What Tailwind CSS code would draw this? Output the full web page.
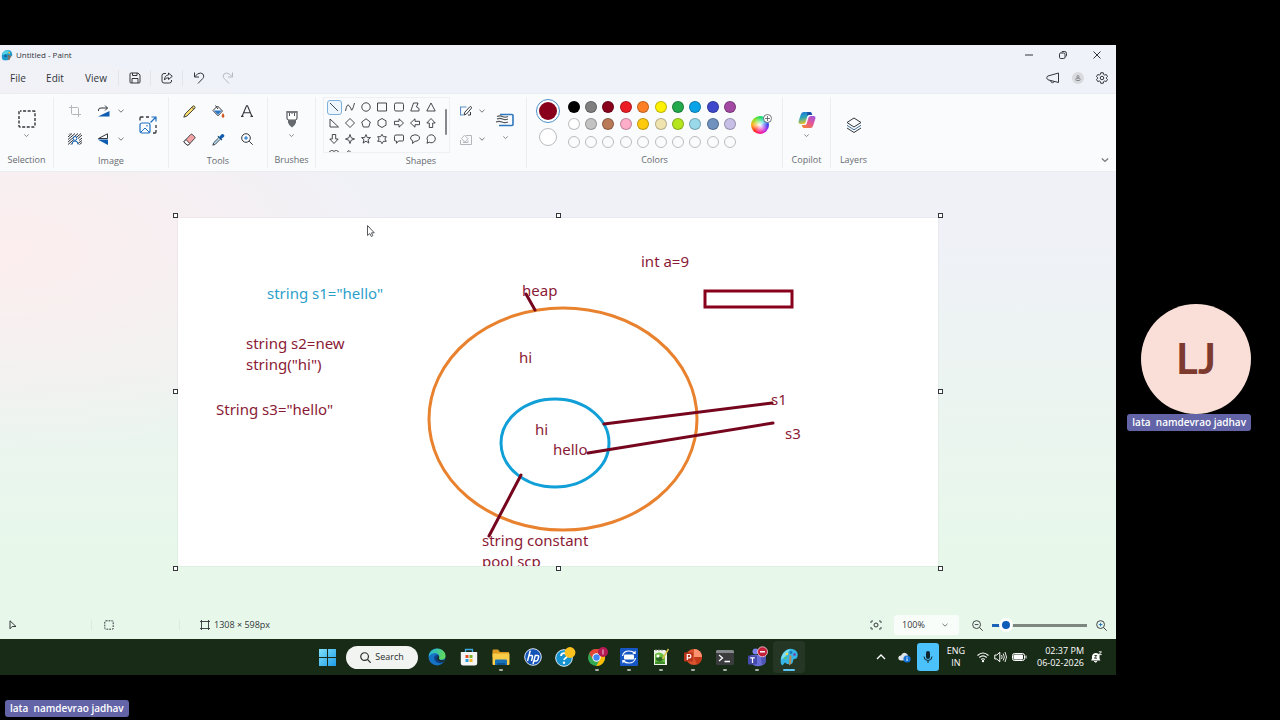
<!DOCTYPE html>
<html lang="en">

<head>
  <meta charset="UTF-8" />
  <title>Untitled - Paint</title>
  <meta name="viewport" content="width=device-width, initial-scale=1.0" />
  <script src="https://cdn.jsdelivr.net/npm/@tailwindcss/browser@4"></script>
</head>

<body class="flex flex-col min-h-screen bg-black pt-[45px] font-['Open_Sans','Noto_Sans',sans-serif] text-[#33363b]">

  <svg class="hidden">
    <symbol id="chev" viewBox="0 0 8 8"><path d="M1.5 2.8 4 5.2l2.5-2.4" fill="none" stroke="#77797d" stroke-width="1" /></symbol>
  </svg>

  <div class="flex flex-1">
    <!-- Paint window -->
    <div class="flex flex-1 flex-col bg-[radial-gradient(ellipse_420px_200px_at_0%_33%,#fdeeee,transparent),linear-gradient(to_bottom,#eff2f8_0%,#eff1f7_30%,#ebf5ef_62%,#e7f8ea_82%)]">

      <header class="flex h-5 items-center justify-between pl-px">
        <div class="flex items-center gap-[3px]">
          <svg class="size-3" viewBox="0 0 16 16">
            <path d="M2 14C0 9 1 3 7 1.500c5-1 8 2 8 6 0 3-3 2.500-4 3-1.500 1 0 4-3 4.500C5 15.500 3 15 2 14Z" fill="#1d9bd1" />
            <path d="M2 6C4 2 8 1 11 2L8 7 2 8Z" fill="#54d3e8" />
            <circle cx="6" cy="9" r="2" fill="#126a9e" /><circle cx="11" cy="5" r="1.300" fill="#f5c542" />
            <path d="m9 8 5 1-3 6-2-1Z" fill="#7a7468" />
          </svg>
          <h1 class="text-[8px] font-medium">Untitled - Paint</h1>
        </div>
        <div class="flex">
          <button class="flex h-5 w-[34px] items-center justify-center" aria-label="Minimize"><svg class="size-2" viewBox="0 0 8 8"><path d="M0 4h8" stroke="currentColor" /></svg></button>
          <button class="flex h-5 w-[34px] items-center justify-center" aria-label="Restore"><svg class="size-2" viewBox="0 0 8 8" fill="none" stroke="currentColor"><rect x=".5" y="2" width="5.500" height="5.500" rx="1.200" /><path d="M2.200 1.500Q2.600.5 4 .5h1.800Q7.500.5 7.500 2.500v1.800q0 1-1 1.500" /></svg></button>
          <button class="mr-[2px] flex h-5 w-[34px] items-center justify-center" aria-label="Close"><svg class="size-2" viewBox="0 0 8 8"><path d="m.5.5 7 7m0-7-7 7" stroke="currentColor" /></svg></button>
        </div>
      </header>

      <nav class="flex h-7 items-center justify-between pb-[2px] text-[10px]">
        <div class="flex h-full items-center">
          <button class="w-9">File</button>
          <button class="w-[38px]">Edit</button>
          <button class="w-11">View</button>
          <button class="flex h-4 w-[33px] items-center justify-center border-x border-black/5" aria-label="Save">
            <svg class="size-3" viewBox="0 0 12 12" fill="none" stroke="currentColor"><path d="M1 2q0-1 1-1h7l2 2v7q0 1-1 1H2q-1 0-1-1Z" /><path d="M3.500 1v2.500h4.500V1M3 11V6.500h6V11" /></svg>
          </button>
          <button class="flex h-4 w-[32px] items-center justify-center border-r border-black/5" aria-label="Share">
            <svg class="size-3" viewBox="0 0 12 12" fill="none" stroke="currentColor"><path d="M5 1.500H3q-2 0-2 2V9q0 2 2 2h5.500q2 0 2-2V8" /><path d="M7.500 1 11.300 4.300 7.500 7.500V5.700Q5 5.500 3.500 8 3.600 3.300 7.500 2.900Z" stroke-linejoin="round" /></svg>
          </button>
          <button class="flex h-4 w-[32px] items-center justify-center" aria-label="Undo">
            <svg class="size-3" viewBox="0 0 12 12" fill="none" stroke="currentColor"><path d="M1.500.5v4.500H6M1.700 4.800Q4.500 1 7.500 1q3 .2 3.300 3 0 1.500-1.200 2.700L5 11.500" /></svg>
          </button>
          <button class="flex h-4 w-[26px] items-center justify-center text-[#b6b9be]" aria-label="Redo">
            <svg class="size-3" viewBox="0 0 12 12" fill="none" stroke="currentColor"><path d="M10.500.5v4.500H6M10.300 4.800Q7.500 1 4.500 1q-3 .2-3.300 3 0 1.500 1.200 2.700L7 11.500" /></svg>
          </button>
        </div>
        <div class="flex items-center gap-3 pr-2">
          <button aria-label="Feedback"><svg class="block h-3 w-[14px]" viewBox="0 0 14 12" fill="none" stroke="currentColor" stroke-linejoin="round"><path d="M12.500 1v9.500L2 7.800Q.8 7 .8 5.700T2 4Z" /><path d="M4.500 8.500Q5 10.800 6.500 10.700T8 9.500" /></svg></button>
          <button class="flex size-3 items-center justify-center rounded-full bg-[#d8dadd] text-[#85888c]" aria-label="Account"><svg class="size-[6px]" viewBox="0 0 6 6" fill="none" stroke="currentColor"><circle cx="3" cy="1.700" r="1.100" /><rect x=".8" y="3.300" width="4.400" height="2.200" rx="1" /></svg></button>
          <button aria-label="Settings"><svg class="block size-3" viewBox="0 0 24 24" fill="none" stroke="currentColor" stroke-width="2"><circle cx="12" cy="12" r="3.500" /><path stroke-linejoin="round" d="M9.500 1.500h5l.7 3.300 2.100 1.200 3.200-1 2.500 4.200-2.500 2.300v1l2.500 2.300-2.500 4.200-3.200-1-2.100 1.200-.7 3.300h-5l-.7-3.300L6.700 18l-3.200 1L1 14.800l2.500-2.300v-1L1 9.200 3.500 5l3.200 1 2.100-1.200Z" /></svg></button>
        </div>
      </nav>

      <!-- Ribbon -->
      <section class="flex h-[79px] items-stretch border-y border-[#e9edf0] bg-[#f9fbfd] py-[3px] text-[9px] text-[#686b70]">
        <div class="flex w-[54px] flex-col items-center border-r border-black/5">
          <button class="flex flex-1 flex-col items-center justify-center gap-1 text-[#33363b]" aria-label="Select">
            <svg class="size-[18px]" viewBox="0 0 18 18"><rect x="1" y="1" width="16" height="16" rx="1" fill="none" stroke="currentColor" stroke-width="1.400" stroke-dasharray="3 1.570" stroke-dashoffset="1.500" /></svg>
            <svg class="size-[7px]"><use href="#chev" /></svg>
          </button>
          <h2 class="h-4 leading-4">Selection</h2>
        </div>

        <div class="flex w-[115px] flex-col items-center border-r border-black/5">
          <div class="flex flex-1 items-center pr-[6px] text-[#33363b]">
            <div class="grid grid-cols-[32px_24px_12px] grid-rows-[28px_28px] place-items-center">
              <button class="text-[#b3b6ba]" aria-label="Crop"><svg class="size-3" viewBox="0 0 12 12" fill="none" stroke="currentColor"><path d="M2.500 0v8.500q0 1 1 1H12M0 2.500h8.500q1 0 1 1V12" /></svg></button>
              <button aria-label="Rotate"><svg class="h-3 w-[13px]" viewBox="0 0 13 12"><path d="M1 11.500 12.500 6v5.500Z" fill="#0f5db0" /><path d="M10.500 3H4Q1.500 3 1.500 5v1M8 .5 10.500 3 8 5.500" fill="none" stroke="currentColor" /></svg></button>
              <button aria-label="Rotate options"><svg class="size-2"><use href="#chev" /></svg></button>
              <button aria-label="Remove background"><svg class="h-3 w-[14px]" viewBox="0 0 14 12" fill="none" stroke="currentColor" stroke-width="1"><path d="M0 4 4 .5M0 6.500 7 .5M0 9 10 .5M0 11.500 13 .5M3 11.500 5 9.500M10 5.500 14 2M11 7.500l3-2.500M10 10.500 14 7.500M11.500 11.500 14 9.500M1 1.500l1-1" /><path d="M4 11.500q0-3.500 3-3.500t3 3.500" fill="#fff" stroke="#0f5db0" /><circle cx="7" cy="5.500" r="1.900" fill="#fff" stroke="#0f5db0" /></svg></button>
              <button aria-label="Flip"><svg class="h-3 w-3" viewBox="0 0 12 12"><path d="M1.500 5.500 10.500.8v4.700Z" fill="none" stroke="currentColor" /><path d="M.5 6.500H11V12Z" fill="#0f5db0" /></svg></button>
              <button aria-label="Flip options"><svg class="size-2"><use href="#chev" /></svg></button>
            </div>
            <button class="ml-[12px]" aria-label="Resize"><svg class="size-[18px]" viewBox="0 0 18 18" fill="none"><path d="M1 4.500V2q0-1 1-1h2.500M7 1h3M17 9v3M17 14v2q0 1-1 1h-2" stroke="#33363b" stroke-width="1.300" /><path d="m11.500 6.500 5-5M12.500 1H17v4.500" stroke="#1f6fc0" stroke-width="1.200" /><rect x="1" y="7" width="10" height="10" rx="2" stroke="#1f6fc0" stroke-width="1.200" /><path d="m2 16 4-4 4 4" stroke="#1f6fc0" /><circle cx="8" cy="9.800" r=".8" fill="#1f6fc0" /></svg></button>
          </div>
          <h2 class="h-4 leading-4">Image</h2>
        </div>

        <div class="flex w-[99px] flex-col items-center border-r border-black/5">
          <div class="grid flex-1 grid-cols-[29px_29px_29px] grid-rows-[28px_28px] place-items-center text-[#33363b]">
            <button aria-label="Pencil"><svg class="size-[13px]" viewBox="0 0 13 13" stroke="#33363b" stroke-linejoin="round"><path d="M.8 12.200 2 9 9.800 1.200q.8-.8 1.800.2t.2 1.800L4 11Z" fill="#f6dc6b" stroke-width=".9" /><path d="m8.800 2.200 2 2" stroke-width=".9" /></svg></button>
            <button aria-label="Fill"><svg class="size-[13px]" viewBox="0 0 13 13"><path d="M1 5.500 5.500 1l5 5L6 10.800Z" fill="#fff" stroke="#33363b" stroke-linejoin="round" /><path d="M1.800 5.500h8L6 9.800Z" fill="#2b78c8" /><path d="M3.500.5 6 4" stroke="#33363b" /><path d="M11 8q1.800 2.500 1.400 3.500-.5 1.300-1.500 1.200T9.600 11.300Q9.500 10.300 11 8Z" fill="#d2551e" /></svg></button>
            <button aria-label="Text"><svg class="size-3" viewBox="0 0 12 12" fill="none" stroke="currentColor" stroke-width="1.100"><path d="M1 11.500 5.500.8h1L11 11.500M2.700 7.800h6.600M0 11.400h2.500M9.500 11.400H12" /></svg></button>
            <button aria-label="Eraser"><svg class="size-[13px]" viewBox="0 0 13 13" stroke="#33363b" stroke-width=".9" stroke-linejoin="round"><path d="M1 8.500 7.800 1.400q.7-.6 1.400 0l2.600 2.500q.7.700 0 1.400L5.500 12H4L1 9.300Z" fill="#f4a3a5" /><path d="M1 8.800 3 6.500 6.700 10.500 5.300 12H4Z" fill="#fff" /></svg></button>
            <button aria-label="Color picker"><svg class="size-[13px]" viewBox="0 0 13 13"><path d="m7 4.500 2-2.800q1.300-1.500 2.700-.2t-.2 2.700L8.700 6.200Z" fill="#0f5db0" /><path d="m6 3.300 3.800 3.800" stroke="#174d86" stroke-width="1.400" /><path d="m6.500 5-4.800 4.700-.9 2.500 2.500-.9L8 6.500" fill="#b5dcf5" stroke="#33363b" stroke-width=".9" /></svg></button>
            <button aria-label="Magnifier"><svg class="size-3" viewBox="0 0 12 12" fill="none" stroke="#33363b"><circle cx="5" cy="5" r="4.300" /><path d="m8.200 8.200 3.500 3.500" /><path d="M5 3v4M3 5h4" stroke="#1f6fc0" /></svg></button>
          </div>
          <h2 class="h-4 leading-4">Tools</h2>
        </div>

        <div class="flex w-12 flex-col items-center border-r border-black/5">
          <button class="flex flex-1 flex-col items-center justify-center gap-1 text-[#33363b]" aria-label="Brush">
            <svg class="h-[18px] w-3" viewBox="0 0 12 18"><path d="M1 1v7q0 1.500 1.500 2h7Q11 9.500 11 8V1" fill="#fff" stroke="#55585c" stroke-width="1.200" /><path d="M3.500 1v5M6 1v3M8.500 1v5" stroke="#55585c" /><path d="M1 1h10v2H1Z" fill="#77797d" /><path d="M2 10h8v2.500q-.5 2.500-4 5-3.500-2.500-4-5Z" fill="#66696d" /></svg>
            <svg class="size-[7px]"><use href="#chev" /></svg>
          </button>
          <h2 class="h-4 leading-4">Brushes</h2>
        </div>

        <div class="flex w-[211px] flex-col items-center border-r border-black/5">
          <div class="flex h-14 items-center pr-1 text-[#33363b]">
            <div class="flex h-full w-[127px] overflow-hidden border border-[#eef0f3] pl-[2px]">
              <div id="shapes" class="grid w-[113px] auto-rows-[16px] grid-cols-7 place-items-center pt-px"></div>
              <div class="mt-[11px] ml-[6px] h-[26px] w-[2px] rounded bg-[#85888c]"></div>
            </div>
            <div class="ml-[7px] grid grid-cols-[17px_15px] grid-rows-[28px_28px] place-items-center">
              <button aria-label="Shape outline"><svg class="h-[10px] w-3" viewBox="0 0 12 10" fill="none" stroke="#33363b"><path d="M6.500 1h-6v8h3" stroke="#5b8fc4" stroke-width="1.200" /><path d="m4 9 .8-2.800L9.800.8q1-.5 1.500.1t0 1.500L6.500 8Z" fill="#fff" stroke-linejoin="round" /><path d="M8 9h2.500V6" /></svg></button>
              <button aria-label="Outline options"><svg class="size-2"><use href="#chev" /></svg></button>
              <button class="text-[#b3b6ba]" aria-label="Shape fill"><svg class="h-[11px] w-3" viewBox="0 0 12 11" fill="none" stroke="currentColor"><path d="M6 1.500h5.500v9H.5V6" /><path d="m1.500 4.500 3-3.300 3.500 3.500-3.300 3.500ZM3 8.500h5v-2" /></svg></button>
              <button class="text-[#999ca0]" aria-label="Fill options"><svg class="size-2"><use href="#chev" /></svg></button>
            </div>
            <button class="ml-[6px] flex w-5 flex-col items-center gap-[7px] pt-[4px]" aria-label="Line size">
              <svg class="h-[14px] w-[18px]" viewBox="0 0 18 14" fill="none"><path d="M4 1.500h12q1 0 1 1v9q0 1-1 1H3" stroke="#2f78bd" stroke-width="1.600" /><path d="M1 3.500q3-1.300 5.500 0t5.500 0M1 6q3-1.300 5.500 0t5.500 0M0 9q3-1.300 6 0t6 0" stroke="#55585c" stroke-width="1.300" /></svg>
              <svg class="size-[7px]"><use href="#chev" /></svg>
            </button>
          </div>
          <h2 class="h-4 leading-4">Shapes</h2>
        </div>

        <div class="flex w-[256px] flex-col items-center border-r border-black/5">
          <div class="flex h-14 items-center pr-1">
            <div class="flex w-6 flex-col items-center gap-[5px] pb-1">
              <button class="flex size-6 items-center justify-center rounded-full border border-[#4c8fc9] bg-white" aria-label="Color 1"><span class="size-[18px] rounded-full bg-[#88001b]"></span></button>
              <button class="size-[18px] rounded-full border border-[#b9bcc0] bg-white" aria-label="Color 2"></button>
            </div>
            <div id="swatches" class="ml-[5px] grid h-[53px] w-[174px] grid-cols-10 grid-rows-3 place-items-center"></div>
            <button class="relative ml-[12px] size-[18px] rounded-full bg-[radial-gradient(circle,#ffffff_0%,transparent_60%),conic-gradient(from_90deg,#4040f0,#c030e0,#ff2090,#ff3020,#ffb020,#90e020,#20e060,#20d0d0,#4040f0)]" aria-label="Edit colors">
              <svg class="absolute -top-[2px] -right-[3px] size-[9px]" viewBox="0 0 9 9"><circle cx="4.500" cy="4.500" r="4" fill="#fff" stroke="#55585c" stroke-width=".8" /><path d="M4.500 2v5M2 4.500h5" stroke="#55585c" stroke-width=".8" /></svg>
            </button>
          </div>
          <h2 class="h-4 leading-4">Colors</h2>
        </div>

        <div class="flex w-12 flex-col items-center border-r border-black/5">
          <button class="flex flex-1 flex-col items-center justify-center gap-[3px] text-[#33363b]" aria-label="Copilot">
            <svg class="size-[18px]" viewBox="0 0 18 18">
              <defs>
                <linearGradient id="cpa" x2=".3" y2="1"><stop stop-color="#1a6fd8" /><stop offset=".5" stop-color="#2aa5b8" /><stop offset="1" stop-color="#e8c52a" /></linearGradient>
                <linearGradient id="cpb" x1=".8" x2=".2" y2="1"><stop stop-color="#a557dc" /><stop offset=".5" stop-color="#e65794" /><stop offset="1" stop-color="#f2803a" /></linearGradient>
              </defs>
              <path d="M5.500 1H12q1.200 0 1.600 1.200L14.200 4H11q-1.200 0-1.600 1.200L7.500 11.500Q7 13 5.500 13H2.500Q0 13 .7 10L2.800 3.500Q3.500 1 5.500 1Z" fill="url(#cpa)" />
              <path d="M12.500 17H6q-1.200 0-1.600-1.200L3.800 14H7q1.200 0 1.600-1.200l1.900-6.300Q11 5 12.500 5h3q2.500 0 1.800 3l-2.100 6.500q-.7 2.500-2.700 2.500Z" fill="url(#cpb)" />
              <path d="M9.400 5.200Q9.800 4 11 4h3.200L13.600 2.200Q13.200 1 12 1H9Z" fill="#1b4fa8" />
            </svg>
            <svg class="size-[7px]"><use href="#chev" /></svg>
          </button>
          <h2 class="h-4 leading-4">Copilot</h2>
        </div>

        <div class="flex w-[45px] flex-col items-center">
          <button class="flex flex-1 items-center" aria-label="Layers"><svg class="size-4" viewBox="0 0 16 16" fill="none" stroke="#33363b" stroke-linejoin="round"><path d="M8 1 15 5.500 8 10 1 5.500Z" /><path d="m1 8.300 7 4.500 7-4.500" stroke="#3d6fa0" /><path d="m1 11 7 4.500 7-4.500" /></svg></button>
          <h2 class="h-4 leading-4">Layers</h2>
        </div>

        <div class="flex flex-1 items-end justify-end pr-[6px] pb-[3px]">
          <button aria-label="Collapse ribbon"><svg class="block size-[10px]"><use href="#chev" /></svg></button>
        </div>
      </section>

      <!-- Workspace -->
      <main class="flex flex-1 items-center justify-center">
        <div class="relative h-[348px] w-[760px] bg-white shadow-[0_0_1px_rgba(0,0,0,0.2)]">
          <svg class="block size-full font-['Noto_Sans',sans-serif] text-[15px]" viewBox="0 0 760 348" fill="none">
            <g fill="#8a1a36">
              <text x="89" y="81" fill="#2b9fcb">string s1="hello"</text>
              <text x="68" y="131">string s2=new</text>
              <text x="68" y="152">string("hi")</text>
              <text x="38" y="197">String s3="hello"</text>
              <text x="463" y="49">int a=9</text>
              <text x="344" y="78">heap</text>
              <text x="341" y="145">hi</text>
              <text x="357" y="217">hi</text>
              <text x="375" y="237">hello</text>
              <text x="593" y="187">s1</text>
              <text x="607" y="221">s3</text>
              <text x="304" y="328">string constant</text>
              <text x="304" y="349">pool scp</text>
            </g>
            <ellipse cx="385" cy="201" rx="134" ry="111" stroke="#e9822f" stroke-width="3" />
            <ellipse cx="377" cy="225" rx="54" ry="44" stroke="#119fd8" stroke-width="3" />
            <g stroke="#76061e" stroke-width="3" stroke-linecap="round">
              <path d="m348 76 9 16M426 206l168-21M410 235l185-30M343 257l-32 61" />
              <rect x="527" y="73" width="87" height="16" stroke="#88001b" stroke-linecap="butt" />
            </g>
            <path d="M189.500 7.500v10l2.300-2 1.500 3 1.500-.8-1.300-2.900h2.800Z" fill="#fff" stroke="#55585c" />
          </svg>
          <div class="absolute -inset-[5px] flex flex-col justify-between">
            <div class="flex justify-between"><i class="size-[5px] border border-[#33363b] bg-white"></i><i class="size-[5px] border border-[#33363b] bg-white"></i><i class="size-[5px] border border-[#33363b] bg-white"></i></div>
            <div class="flex justify-between"><i class="size-[5px] border border-[#33363b] bg-white"></i><i class="size-[5px] border border-[#33363b] bg-white"></i></div>
            <div class="flex justify-between"><i class="size-[5px] border border-[#33363b] bg-white"></i><i class="size-[5px] border border-[#33363b] bg-white"></i><i class="size-[5px] border border-[#33363b] bg-white"></i></div>
          </div>
        </div>
      </main>

      <!-- Status bar -->
      <footer class="flex h-7 items-center justify-between text-[9px]">
        <div class="flex items-center">
          <div class="flex w-[92px] items-center border-r border-black/5 pl-2">
            <svg class="size-[10px]" viewBox="0 0 10 10" fill="none" stroke="currentColor"><path d="M2 .8v8l2.200-2.300H8Z" stroke-linejoin="round" /></svg>
          </div>
          <div class="flex w-[88px] items-center border-r border-black/5 pl-3">
            <svg class="size-[10px]" viewBox="0 0 10 10"><rect x=".8" y=".8" width="8.400" height="8.400" rx="1" fill="none" stroke="currentColor" stroke-dasharray="1.800 1" /></svg>
          </div>
          <div class="flex items-center gap-1 pl-5">
            <svg class="size-[10px]" viewBox="0 0 10 10" fill="none" stroke="currentColor"><path d="M1.500 0v10M8.500 0v10M0 1.500h10M0 8.500h10" stroke-width=".9" /></svg>
            <span>1308 × 598px</span>
          </div>
        </div>
        <div class="flex items-center pr-[9px]">
          <button aria-label="Fit to window"><svg class="block h-[10px] w-3" viewBox="0 0 12 10" fill="none" stroke="currentColor"><path d="M1 3V1.500Q1 1 1.500 1H3M9 1h1.500q.5 0 .5.500V3M11 7v1.500q0 .5-.5.500H9M3 9H1.500Q1 9 1 8.500V7" /><circle cx="6" cy="5" r="2" /></svg></button>
          <div class="relative ml-3 w-[65px]">
            <select class="block h-5 w-full appearance-none rounded-[3px] bg-[#f9fdfa] pl-2 text-[9px] leading-5" aria-label="Zoom level">
              <option>100%</option>
            </select>
            <svg class="pointer-events-none absolute top-[6px] right-[10px] size-2"><use href="#chev" /></svg>
          </div>
          <button class="ml-[13px]" aria-label="Zoom out"><svg class="block size-[11px]" viewBox="0 0 12 12" fill="none" stroke="currentColor"><circle cx="5" cy="5" r="4.300" /><path d="m8.200 8.200 3.500 3.500M3 5h4" /></svg></button>
          <input type="range" value="9" aria-label="Zoom"
            class="mx-[9px] h-[14px] w-[95px] appearance-none bg-[linear-gradient(to_right,#1a62b5_8px,#7d8780_8px)] bg-[length:100%_3px] bg-center bg-no-repeat [&::-webkit-slider-thumb]:size-[14px] [&::-webkit-slider-thumb]:appearance-none [&::-webkit-slider-thumb]:rounded-full [&::-webkit-slider-thumb]:border-3 [&::-webkit-slider-thumb]:border-white [&::-webkit-slider-thumb]:bg-[#0f5db8]" />
          <button aria-label="Zoom in"><svg class="block size-[11px]" viewBox="0 0 12 12" fill="none" stroke="currentColor"><circle cx="5" cy="5" r="4.300" /><path d="m8.200 8.200 3.500 3.500" /><path d="M5 3v4M3 5h4" stroke="#1f6fc0" /></svg></button>
        </div>
      </footer>

      <!-- Taskbar -->
      <div class="grid h-9 grid-cols-[1fr_auto_1fr] items-center bg-[#182b17] text-white">
        <div></div>
        <div class="flex items-center">
          <button class="flex h-8 w-8 items-center justify-center" aria-label="Start"><svg class="size-[17px]" viewBox="0 0 16 16"><defs><linearGradient id="win" x2="1" y2="1"><stop stop-color="#7fe0fb" /><stop offset="1" stop-color="#1e9ce8" /></linearGradient></defs><path d="M0 0h7.500v7.500H0ZM8.500 0H16v7.500H8.500ZM0 8.500h7.500V16H0ZM8.500 8.500H16V16H8.500Z" fill="url(#win)" /></svg></button>
          <button class="mx-[3px] flex h-[23px] w-[72px] items-center justify-center gap-1 rounded-full bg-[#f2f4f2] text-[9px] text-[#2a2d2a]">
            <svg class="size-[11px]" viewBox="0 0 12 12" fill="none" stroke="currentColor" stroke-width="1.300"><circle cx="5" cy="5" r="4.200" /><path d="m8.200 8.200 3.500 3.500" /></svg>
            Search
          </button>
          <button class="flex h-8 w-8 items-center justify-center" aria-label="Edge">
            <svg class="size-[18px]" viewBox="0 0 18 18"><defs><linearGradient id="ed" x2="1" y2=".3"><stop stop-color="#1db1e6" /><stop offset="1" stop-color="#5fd85e" /></linearGradient></defs><circle cx="9" cy="9" r="8.500" fill="#1572c4" /><path d="M.6 8.500Q1.500 1 9 .5q7.500.3 8.500 7 .2 4-4 4.200-3 0-2.500-1.700 1-2-1-4Q5 3 .6 8.500Z" fill="url(#ed)" /><path d="M6 9.500Q7 6.300 10 6.800q1.500 1 1 3-.8 2.200 2 2.500 2 .2 3.500-.8-.5 2-2.500 3.500Q7 16 6 9.500Z" fill="#0d3f86" /><path d="M10.500 8q1.300 1.500.4 3 .8 1.500 3.100 1.500 2 0 3-1.500l-1 2.500q-3 1-5.500-1T10.500 8Z" fill="#182b17" /></svg>
          </button>
          <button class="flex h-8 w-8 items-center justify-center" aria-label="Store">
            <svg class="size-[18px]" viewBox="0 0 18 18"><path d="M5.500 4V1.500h7V4" fill="none" stroke="#3da9e0" stroke-width="1.300" /><path d="M.8 4h16.400v11q0 2.500-2.500 2.500H3.300Q.8 17.500.8 15Z" fill="#f3f5f6" /><path d="M5.500 7h3v3h-3Z" fill="#e5512c" /><path d="M9.500 7h3v3h-3Z" fill="#7eb52c" /><path d="M5.500 11h3v3h-3Z" fill="#2a9fdc" /><path d="M9.500 11h3v3h-3Z" fill="#f2b722" /></svg>
          </button>
          <button class="relative flex h-8 w-8 items-center justify-center" aria-label="File Explorer">
            <svg class="size-[18px]" viewBox="0 0 18 18"><path d="M.5 2.500q0-1 1-1H6L8 4h9v5H.5Z" fill="#dc9a22" /><path d="M.5 5.500h17V16q0 1-1 1h-15q-1 0-1-1Z" fill="#fbcc47" /><path d="M3 17v-4.500q0-1 1-1h10q1 0 1 1V17Z" fill="#1872b8" /><path d="M5 15h8v2H5Z" fill="#0f548f" /></svg>
            <i class="absolute bottom-[2px] h-[2px] w-1 rounded bg-[#a9b0a9]"></i>
          </button>
          <button class="flex h-8 w-8 items-center justify-center" aria-label="HP">
            <svg class="size-[18px]" viewBox="0 0 18 18"><circle cx="9" cy="9" r="8.300" fill="#1253b8" stroke="#dce6f5" stroke-width="1" /><path d="M6.300 2.500 3.500 13M5 7.500h2.500q1.300 0 1 1.300L7.400 13M9 16l2.300-8.500h2.200q1.500 0 1.100 1.500l-.7 2.500q-.4 1.500-1.800 1.500H10" fill="none" stroke="#fff" stroke-width="1.400" /></svg>
          </button>
          <button class="flex h-8 w-8 items-center justify-center" aria-label="Help">
            <svg class="h-5 w-[22px]" viewBox="0 0 22 20"><circle cx="10" cy="11" r="8.300" fill="#1692cf" stroke="#dceef8" /><path d="M7 9q.2-2.800 3-2.800T13 9q0 1.300-1.700 2.200-1.200.7-1.200 1.900" fill="none" stroke="#fff" stroke-width="1.800" /><circle cx="10" cy="15.700" r="1.200" fill="#fff" /><circle cx="16" cy="5.500" r="5.400" fill="#fbc21e" /></svg>
          </button>
          <button class="relative flex h-8 w-8 items-center justify-center" aria-label="Chrome">
            <svg class="h-5 w-[22px]" viewBox="0 0 22 20"><circle cx="10.500" cy="10.500" r="8.500" fill="#34a853" /><path d="M3.100 6.200A8.500 8.500 0 0 1 18 6.500H10.500Z" fill="#ea4335" /><path d="M3.100 6.200 7 12.500l3.500-6Z" fill="#ea4335" /><path d="M18 6.500a8.500 8.500 0 0 1-7.800 12.500L14 12.500l-1-6Z" fill="#fbbc05" /><circle cx="10.500" cy="10.500" r="4.200" fill="#fff" /><circle cx="10.500" cy="10.500" r="3.200" fill="#4285f4" /><circle cx="17" cy="5" r="5" fill="#b51a55" /><path d="M17 2.500v5" stroke="#fff" stroke-opacity=".8" /></svg>
            <i class="absolute bottom-[2px] h-[2px] w-1 rounded bg-[#a9b0a9]"></i>
          </button>
          <button class="relative flex h-8 w-8 items-center justify-center" aria-label="Remote Support">
            <svg class="size-[18px]" viewBox="0 0 18 18"><rect width="18" height="18" rx="1" fill="#1656c5" /><rect x="4" y="6.500" width="10" height="5" rx="1" fill="#fff" /><path d="M2.500 8Q3.500 3 9 3q3.500 0 5.500 2M15.500 10q-1 5-6.500 5-3.500 0-5.500-2" fill="none" stroke="#fff" stroke-width="1.200" /><path d="m15.500 2.500.3 3.500-3.300-.2ZM2.500 15.500l-.3-3.500 3.300.2Z" fill="#fff" /></svg>
            <i class="absolute bottom-[2px] h-[2px] w-1 rounded bg-[#a9b0a9]"></i>
          </button>
          <button class="relative flex h-8 w-8 items-center justify-center" aria-label="Notepad++">
            <svg class="size-[18px]" viewBox="0 0 18 18"><path d="M2 2h11l2 2v13H2Z" fill="#edf3e8" /><path d="M3 6q4-3 8 0l2 3v6H3Z" fill="#6fbd42" /><path d="M4 10q4-3 8 1-4 4-8 1" fill="#2c6821" /><path d="M3 14.500q5-3 10 0V16H3Z" fill="#3e8d2a" /><circle cx="6" cy="8" r="1.500" fill="#fff" /><path d="m10.500 11 6-10" stroke="#d4c24a" stroke-width="1.500" /><path d="M4 1v2M7 1v2M10 1v2" stroke="#777" /></svg>
            <i class="absolute bottom-[2px] h-[2px] w-1 rounded bg-[#a9b0a9]"></i>
          </button>
          <button class="relative flex h-8 w-8 items-center justify-center" aria-label="PowerPoint">
            <svg class="size-[18px]" viewBox="0 0 18 18"><circle cx="10" cy="9" r="8" fill="#d9532f" /><path d="M10 1a8 8 0 0 1 8 8h-8Z" fill="#ff9270" /><path d="M10 9h8a8 8 0 0 1-5 7.400Z" fill="#c13b1b" /><rect x="0" y="4.500" width="9" height="9" rx="1" fill="#b9351b" /><path d="M3.300 12V6.500h1.900q1.700 0 1.700 1.700T5.200 9.900H3.500" fill="none" stroke="#fff" stroke-width="1.200" /></svg>
            <i class="absolute bottom-[2px] h-[2px] w-1 rounded bg-[#a9b0a9]"></i>
          </button>
          <button class="relative flex h-8 w-8 items-center justify-center" aria-label="Terminal">
            <svg class="h-[15px] w-[18px]" viewBox="0 0 18 15"><rect width="18" height="15" rx="1.500" fill="#3a3c3e" /><path d="M0 1.500Q0 0 1.500 0h15Q18 0 18 1.500V3H0Z" fill="#85898c" /><path d="m3 5 3.500 3L3 11M8.500 11.500H14" fill="none" stroke="#fff" stroke-width="1.300" /></svg>
            <i class="absolute bottom-[2px] h-[2px] w-1 rounded bg-[#a9b0a9]"></i>
          </button>
          <button class="relative flex h-8 w-8 items-center justify-center" aria-label="Teams">
            <svg class="size-[22px]" viewBox="0 0 22 22"><circle cx="9.500" cy="5.500" r="3" fill="#7b83eb" /><path d="M5 9h13q1.500 0 1.500 1.500V15q-.5 4-4 4.500-2 1-6 .5-4-1-4.500-5Z" fill="#6a70d8" /><path d="M14.500 9h4q1.500 0 1.500 1.500V15q-.5 3.500-4 4Z" fill="#4f55b5" /><rect x="2" y="9.500" width="9" height="9" rx="1" fill="#454bab" /><path d="M4.200 11.800h4.600M6.500 11.800V17" stroke="#fff" stroke-width="1.200" /><circle cx="16.500" cy="5.800" r="5" fill="#c4203a" stroke="#f3dadd" stroke-width=".8" /><path d="M14 5.800h5" stroke="#fff" stroke-width="1.500" /></svg>
            <i class="absolute bottom-[2px] h-[2px] w-1 rounded bg-[#a9b0a9]"></i>
          </button>
          <button class="relative flex h-8 w-8 items-center justify-center rounded bg-white/6" aria-label="Paint">
            <svg class="size-[18px]" viewBox="0 0 18 18"><path d="M1 16Q-.5 9 4 4T14 1.500q4.500 2 3.500 7-.5 2.500-3 2.500-1.500 0-1.500 2 0 3-3 3.300T5 14.500L2.500 17.500Z" fill="#35b4e6" /><path d="M1 12Q2 3 10 1L6 8Z" fill="#7be0f4" /><circle cx="7" cy="6" r="1.300" fill="#f7d64c" /><circle cx="11" cy="4.500" r="1.300" fill="#176bb0" /><circle cx="14.500" cy="6.500" r="1.300" fill="#7c3fa8" /><circle cx="5.500" cy="10" r="1.300" fill="#58c865" /><path d="m9.500 7 2 1-.5 8-2 1.500Z" fill="#b98a52" /></svg>
            <i class="absolute bottom-[2px] h-[2px] w-3 rounded bg-[#5cc3f2]"></i>
          </button>
        </div>
        <div class="flex items-center justify-end pr-[14px] text-[9px] leading-3">
          <button aria-label="Hidden icons"><svg class="block h-2 w-[10px]" viewBox="0 0 10 8"><path d="m1 6 4-4 4 4" fill="none" stroke="#fff" stroke-width="1.300" /></svg></button>
          <button class="ml-3" aria-label="OneDrive"><svg class="block h-3 w-[13px]" viewBox="0 0 13 12"><path d="M3 9.500Q0 9 .3 6.700T3 4.500Q4.500 1 7.500 2q2.500 1 2.500 3l-1 4.500Z" fill="#dfe3e6" /><circle cx="9" cy="8" r="3.600" fill="#1272d6" /><path d="M9 7.500v2.500M9 5.800v1" stroke="#fff" /></svg></button>
          <button class="ml-[6px] flex h-7 w-[22px] items-center justify-center rounded-[3px] bg-[#4cc2fd]" aria-label="Microphone"><svg class="h-3 w-[10px]" viewBox="0 0 10 12"><rect x="3" y="0" width="4" height="8" rx="2" fill="#10242e" /><path d="M1 5.500q0 4 4 4t4-4M5 9.500V12" fill="none" stroke="#10242e" /></svg></button>
          <button class="ml-2 text-center">ENG<br />IN</button>
          <button class="ml-3 flex items-center gap-[5px]" aria-label="Network, volume and battery">
            <svg class="h-3 w-3" viewBox="0 0 12 12" fill="none" stroke="#fff" stroke-width="1.100"><path d="M.5 4.500q5.500-5 11 0M2.300 6.500q3.700-3.300 7.400 0M4.200 8.500q1.800-1.500 3.600 0" /><circle cx="6" cy="10.200" r=".6" fill="#fff" /></svg>
            <svg class="h-3 w-[13px]" viewBox="0 0 13 12" fill="none" stroke="#fff" stroke-linejoin="round"><path d="M.8 4v4h2l3 2.800V1.200l-3 2.800Z" /><path d="M7.500 4q1.300 2 0 4M9.200 2.500q2.300 3.500 0 7M11 1q3 5 0 10" stroke-width=".9" /></svg>
            <svg class="h-2 w-[15px]" viewBox="0 0 15 8"><rect x=".5" y=".5" width="12" height="7" rx="2" fill="none" stroke="#fff" /><rect x="1.500" y="1.500" width="9.500" height="5" rx="1" fill="#fff" /><path d="M14 2.500v3" stroke="#fff" /></svg>
          </button>
          <button class="ml-[10px] text-right">02:37 PM<br />06-02-2026</button>
          <button class="ml-[6px]" aria-label="Notifications"><svg class="block h-3 w-3" viewBox="0 0 12 12"><path d="M1 9.500Q2.300 8 2 5.500 2.300 2 6 2q2.500 0 3.500 2v2.500q0 2 1 3Z" fill="#fff" /><path d="M4.200 10.300q1.500 1.700 3 0" stroke="#fff" fill="#fff" /><path d="M4.500 4.500h2.200L4.500 7.200h2.500" fill="none" stroke="#182b17" stroke-width=".9" /><path d="M8.800.8h2.700L9 3.600h2.700" fill="none" stroke="#fff" stroke-width=".9" /></svg></button>
        </div>
      </div>
    </div>

    <!-- Participant -->
    <aside class="flex w-[164px] flex-col items-end justify-center pt-[14px] pr-[29px]">
      <div class="flex size-[110px] items-center justify-center rounded-full bg-[#f9dfd8] font-['Lato',sans-serif] text-[42px] font-bold text-[#7d3a2f]">LJ</div>
      <p class="rounded-[3px] bg-[#6264a7] px-[5px] text-[10px] leading-[17px] font-semibold whitespace-pre text-white">lata  namdevrao jadhav</p>
    </aside>
  </div>

  <div class="flex h-[45px] items-end pb-[3px] pl-[5px]">
    <p class="rounded-[3px] bg-[#6264a7] px-[5px] text-[10px] leading-[17px] font-semibold whitespace-pre text-white">lata  namdevrao jadhav</p>
  </div>

  <script>
    const shapes = [
      ['Line', 'M1 1l8 8'],
      ['Curve', 'M.5 9Q2 1 4 3.500T6.500 8 9.500 1'],
      ['Oval', 'M5 .8a4.200 4.200 0 1 0 .01 0Z'],
      ['Rectangle', 'M.5 1h9v8h-9Z'],
      ['Rounded rectangle', 'M2 1h6q1.500 0 1.500 1.500v5Q9.500 9 8 9H2Q.5 9 .5 7.500v-5Q.5 1 2 1Z'],
      ['Polygon', 'M3.500 1H8L6.500 5 9 6.500V9H.8Z'],
      ['Triangle', 'M5 1l4.200 8H.8Z'],
      ['Right triangle', 'M1 1v8h8.500Z'],
      ['Diamond', 'M5 .5 9.500 5 5 9.500.5 5Z'],
      ['Pentagon', 'M5 .8 9.300 4 7.700 9H2.300L.7 4Z'],
      ['Hexagon', 'M5 .5 9 2.800v4.400L5 9.500 1 7.200V2.800Z'],
      ['Right arrow', 'M.5 3.300H5V.8L9.500 5 5 9.200V6.700H.5Z'],
      ['Left arrow', 'M9.500 3.300H5V.8L.5 5 5 9.200V6.700h4.500Z'],
      ['Up arrow', 'M3.300 9.500V5H.8L5 .5 9.200 5H6.700v4.500Z'],
      ['Down arrow', 'M3.300.5V5H.8L5 9.500 9.200 5H6.700V.5Z'],
      ['Four-point star', 'M5 .5l1.200 3.300L9.500 5 6.200 6.200 5 9.500 3.800 6.200.5 5l3.300-1.200Z'],
      ['Five-point star', 'M5 .6l1.300 3h3.200L7 5.700l.9 3.400L5 7.200 2.100 9.100 3 5.700.5 3.600h3.200Z'],
      ['Six-point star', 'M5 .3l1.400 2.400h2.900L7.900 5l1.400 2.300H6.400L5 9.700 3.600 7.300H.7L2.100 5 .7 2.700h2.900Z'],
      ['Rounded callout', 'M2 1h6.500q1 0 1 1v4q0 1-1 1H4.500L2.500 9.300V7H1.500q-1 0-1-1V2.500Q.5 1 2 1Z'],
      ['Oval callout', 'M5 .8q4.500.3 4.500 3.200T5 7.300L2.500 9.500 2.800 6.800Q.5 6 .5 4 .8 1 5 .8Z'],
      ['Cloud callout', 'M5.200.8a4 4 0 1 1-2 7.400L1 9.300l.6-2.500A4 4 0 0 1 5.200.8Z'],
      ['Heart', 'M5 9 .5 4Q-.5 1 2.500.5 4 .3 5 1.500 6 .3 7.500.5q3 .5 2 3.500Z'],
      ['Lightning', 'M1 3 4 .5 6 2.500 5.500 3l3 2.500L8 7l1.500 2.500L3 6Z']
    ];
    document.getElementById("shapes").innerHTML = shapes.map(([name, d], i) => `
      <button class="${i === 0 ? 'flex size-[15px] items-center justify-center rounded-[3px] border border-[#7fb0dc] bg-[#eef6fd]' : 'flex size-[14px] items-center justify-center'}" aria-label="${name}">
        <svg class="size-[10px]" viewBox="0 0 10 10"><path d="${d}" fill="none" stroke="currentColor" stroke-width=".9" stroke-linejoin="round" /></svg>
      </button>`).join("");

    const colors = [
      '#000000', '#7f7f7f', '#88001b', '#ec1c24', '#ff7f27', '#fff200', '#22a94b', '#0aa3e8', '#3f48cc', '#a349a4',
      '#ffffff', '#c3c3c3', '#b97a57', '#ffaec9', '#ffc90e', '#efe4b0', '#b5e61d', '#99d9ea', '#7092be', '#c8bfe7'
    ];
    let html = "";
    for (let i = 0; i < 30; i++) {
      html += `<button class="size-3 rounded-full border border-black/25" style="background:${colors[i] || 'transparent'}" aria-label="Swatch ${i + 1}"></button>`;
    }
    document.getElementById("swatches").innerHTML = html;
  </script>

</body>

</html>
